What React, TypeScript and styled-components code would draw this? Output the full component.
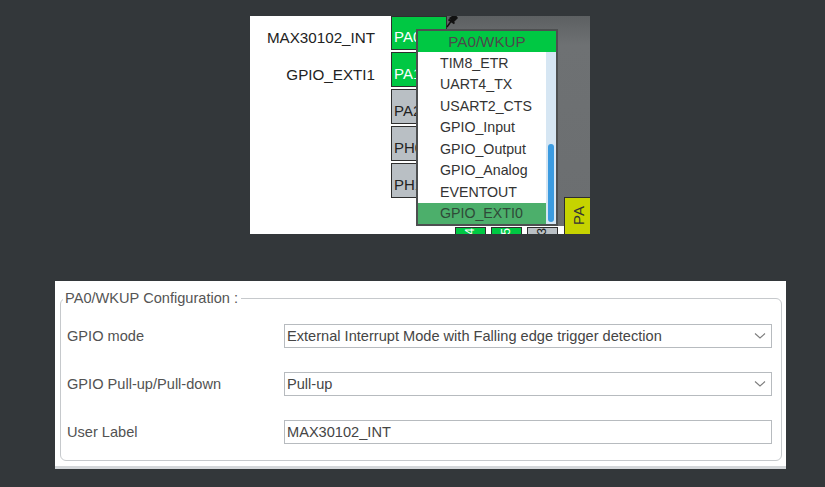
import React from "react";
import styled, { createGlobalStyle } from "styled-components";

const GlobalStyle = createGlobalStyle`
  html, body { margin: 0; padding: 0; background: #33373a; }
  body { font-family: "Liberation Sans", Arial, sans-serif; }
  * { box-sizing: border-box; }
`;

const Page = styled.div`
  width: 825px;
  height: 487px;
  background: #33373a;
  display: flex;
  flex-direction: column;
  padding-top: 16px;
  overflow: hidden;
`;

/* ---------- chip view ---------- */
const ChipView = styled.div`
  margin-left: 250px;
  width: 340px;
  height: 218px;
  background: #ffffff;
  position: relative;
  display: flex;
  overflow: hidden;
`;

const PinList = styled.div`
  display: flex;
  flex-direction: column;
  gap: 2px;
`;

const PinRow = styled.div<{ $h: number }>`
  display: flex;
  height: ${(p) => p.$h}px;
`;

const SignalLabel = styled.div`
  width: 125px;
  margin-right: 16px;
  text-align: right;
  align-self: flex-end;
  padding-bottom: 4px;
  font-size: 15.2px;
  color: #222;
  white-space: nowrap;
`;

const Pin = styled.div<{ $kind: "green" | "grey" }>`
  width: 56px;
  height: 100%;
  border: 1px solid #2e2e2e;
  background: ${(p) => (p.$kind === "green" ? "#00c843" : "#b9bfc4")};
  color: ${(p) => (p.$kind === "green" ? "#ffffff" : "#222")};
  font-size: 15px;
  display: flex;
  align-items: flex-end;
  padding: 0 0 4px 2px;
`;

const ChipColumn = styled.div`
  flex: 1;
  display: flex;
  flex-direction: column;
  position: relative;
`;

const ChipBody = styled.div`
  height: 210px;
  background: linear-gradient(180deg, #5d6062 0%, #6e7173 14%, #6b6e70 100%);
  position: relative;
`;

const BottomPins = styled.div`
  display: flex;
  gap: 5px;
  padding-left: 8px;
  height: 8px;
  background: #ffffff;
`;

const BottomPin = styled.div<{ $kind: "green" | "grey" }>`
  width: 31px;
  height: 8px;
  margin-top: 1px;
  border: 1px solid #2e2e2e;
  border-bottom: none;
  background: ${(p) => (p.$kind === "green" ? "#00c843" : "#b9bfc4")};
  color: ${(p) => (p.$kind === "green" ? "#ffffff" : "#222")};
  font-size: 12px;
  line-height: 1;
  display: flex;
  align-items: center;
  justify-content: center;
`;

const RotatedDigit = styled.span`
  display: inline-block;
  transform: rotate(-90deg);
  line-height: 7px;
  height: 7px;
`;

const YellowPin = styled.div`
  position: absolute;
  left: 117px;
  top: 181px;
  width: 29px;
  height: 50px;
  background: #c6d300;
  border: 1px solid #2e2e2e;
  color: #333;
  font-size: 15px;
  writing-mode: vertical-rl;
  transform: rotate(180deg);
  display: flex;
  align-items: center;
  justify-content: flex-end;
  padding-bottom: 8px;
`;

const PinMarker = styled.svg`
  position: absolute;
  left: -2px;
  top: -3px;
`;

/* ---------- popup menu ---------- */
const Popup = styled.div`
  position: absolute;
  left: 166px;
  top: 13px;
  width: 142px;
  height: 197px;
  border: 2px solid #4d4f50;
  background: #ffffff;
  display: flex;
  flex-direction: column;
  overflow: hidden;
`;

const PopupHeader = styled.div`
  height: 21px;
  background: #00c843;
  color: #4a4a4a;
  font-size: 15.2px;
  display: flex;
  align-items: center;
  justify-content: center;
  flex-shrink: 0;
`;

const PopupBody = styled.div`
  flex: 1;
  display: flex;
`;

const ItemList = styled.div`
  flex: 1;
  display: flex;
  flex-direction: column;
`;

const Item = styled.div<{ $selected?: boolean }>`
  height: 21.5px;
  display: flex;
  align-items: center;
  padding-left: 22px;
  font-size: 14.2px;
  color: ${(p) => (p.$selected ? "#2f4a38" : "#333")};
  background: ${(p) => (p.$selected ? "#4caf6b" : "transparent")};
`;

const ScrollTrack = styled.div`
  width: 10px;
  background: #d6e6f3;
  display: flex;
  flex-direction: column;
  justify-content: flex-end;
  padding-bottom: 2px;
`;

const ScrollThumb = styled.div`
  height: 78px;
  margin: 0 2px;
  border-radius: 3px;
  background: #3b9be0;
`;

/* ---------- configuration panel ---------- */
const Panel = styled.div`
  margin-top: 47px;
  margin-left: 55px;
  width: 731px;
  height: 188px;
  background: #ffffff;
  border-bottom: 3px solid #d3d6d9;
  padding: 9px 4px 0 5px;
`;

const Fieldset = styled.fieldset`
  margin: 0;
  height: 171px;
  border: 1px solid #c6c9cc;
  border-radius: 6px;
  padding: 18px 9px 0 2px;
`;

const Legend = styled.legend`
  padding: 0 3px 0 2px;
  font-size: 14.6px;
  line-height: 16px;
  color: #555;
`;

const FormGrid = styled.div`
  display: grid;
  grid-template-columns: 217px 1fr;
  row-gap: 24px;
  padding-left: 4px;
  align-items: center;
`;

const FieldLabel = styled.div`
  font-size: 14.6px;
  color: #525252;
`;

const Control = styled.div`
  height: 24px;
  border: 1px solid #b7bbbf;
  background: #ffffff;
  display: flex;
  align-items: center;
  justify-content: space-between;
  padding: 0 5px 0 2px;
  font-size: 14.6px;
  color: #454545;
`;

const Chevron = () => (
  <svg width="12" height="8" viewBox="0 0 12 8">
    <polyline points="1,1.5 6,6 11,1.5" fill="none" stroke="#7d7d7d" strokeWidth="1.1" />
  </svg>
);

const pins = [
  { label: "MAX30102_INT", name: "PA0", kind: "green" as const, h: 34 },
  { label: "GPIO_EXTI1", name: "PA1", kind: "green" as const, h: 35 },
  { label: "", name: "PA2", kind: "grey" as const, h: 35 },
  { label: "", name: "PH0", kind: "grey" as const, h: 35 },
  { label: "", name: "PH1", kind: "grey" as const, h: 35 },
];

const bottomPins = [
  { n: "4", kind: "green" as const },
  { n: "5", kind: "green" as const },
  { n: "3", kind: "grey" as const },
];

const menuItems = [
  "TIM8_ETR",
  "UART4_TX",
  "USART2_CTS",
  "GPIO_Input",
  "GPIO_Output",
  "GPIO_Analog",
  "EVENTOUT",
  "GPIO_EXTI0",
];

export default function App() {
  return (
    <>
      <GlobalStyle />
      <Page>
        <ChipView>
          <PinList>
            {pins.map((p) => (
              <PinRow key={p.name} $h={p.h}>
                <SignalLabel>{p.label}</SignalLabel>
                <Pin $kind={p.kind}>{p.name}</Pin>
              </PinRow>
            ))}
          </PinList>
          <ChipColumn>
            <ChipBody>
              <PinMarker width="14" height="16" viewBox="0 0 14 16">
                <line x1="2" y1="14" x2="7" y2="7" stroke="#111" strokeWidth="1.4" />
                <path d="M4 5 L10 1 L13 5 L8 10 Z" fill="#111" />
                <path d="M3.5 6.5 L9.5 10.5" stroke="#111" strokeWidth="2" />
              </PinMarker>
            </ChipBody>
            <BottomPins>
              {bottomPins.map((b) => (
                <BottomPin key={b.n} $kind={b.kind}>
                  <RotatedDigit>{b.n}</RotatedDigit>
                </BottomPin>
              ))}
            </BottomPins>
            <YellowPin>PA</YellowPin>
          </ChipColumn>
          <Popup>
            <PopupHeader>PA0/WKUP</PopupHeader>
            <PopupBody>
              <ItemList>
                {menuItems.map((m) => (
                  <Item key={m} $selected={m === "GPIO_EXTI0"}>
                    {m}
                  </Item>
                ))}
              </ItemList>
              <ScrollTrack>
                <ScrollThumb />
              </ScrollTrack>
            </PopupBody>
          </Popup>
        </ChipView>

        <Panel>
          <Fieldset>
            <Legend>PA0/WKUP Configuration :</Legend>
            <FormGrid>
              <FieldLabel>GPIO mode</FieldLabel>
              <Control>
                <span>External Interrupt Mode with Falling edge trigger detection</span>
                <Chevron />
              </Control>
              <FieldLabel>GPIO Pull-up/Pull-down</FieldLabel>
              <Control>
                <span>Pull-up</span>
                <Chevron />
              </Control>
              <FieldLabel>User Label</FieldLabel>
              <Control>
                <span>MAX30102_INT</span>
              </Control>
            </FormGrid>
          </Fieldset>
        </Panel>
      </Page>
    </>
  );
}
